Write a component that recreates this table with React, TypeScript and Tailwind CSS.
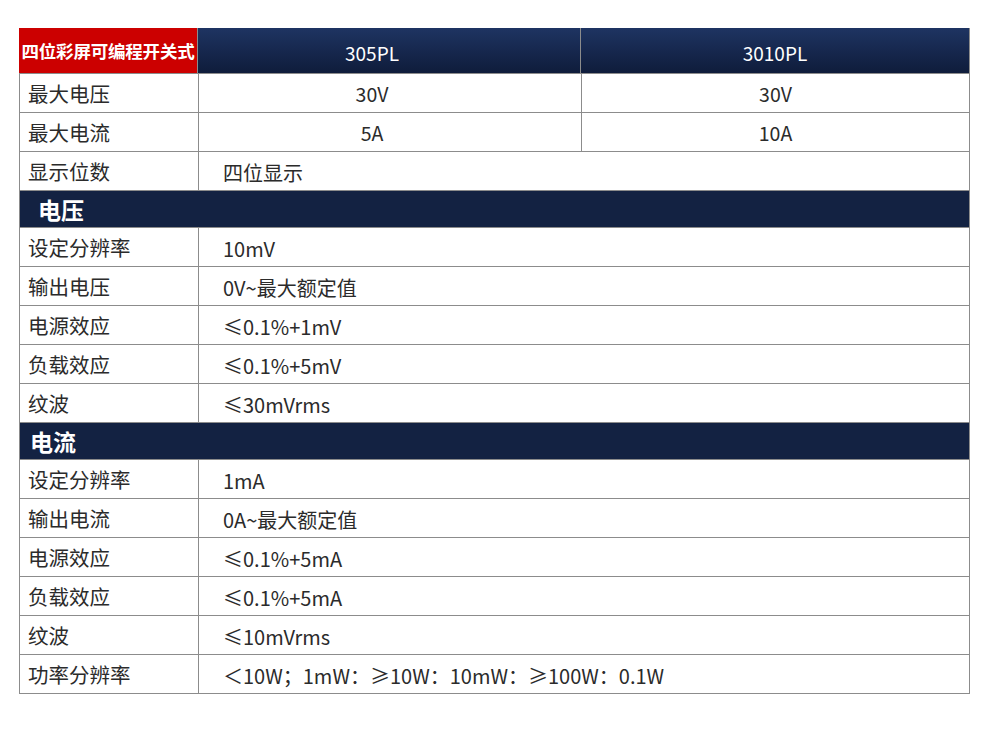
import React from "react";

type Row =
  | { kind: "pair"; label: string; a: string; b: string }
  | { kind: "single"; label: string; value: string }
  | { kind: "section"; title: string; pad: string };

const rows: Row[] = [
  { kind: "pair", label: "最大电压", a: "30V", b: "30V" },
  { kind: "pair", label: "最大电流", a: "5A", b: "10A" },
  { kind: "single", label: "显示位数", value: "四位显示" },
  { kind: "section", title: "电压", pad: "pl-[18px]" },
  { kind: "single", label: "设定分辨率", value: "10mV" },
  { kind: "single", label: "输出电压", value: "0V~最大额定值" },
  { kind: "single", label: "电源效应", value: "≤0.1%+1mV" },
  { kind: "single", label: "负载效应", value: "≤0.1%+5mV" },
  { kind: "single", label: "纹波", value: "≤30mVrms" },
  { kind: "section", title: "电流", pad: "pl-[10px]" },
  { kind: "single", label: "设定分辨率", value: "1mA" },
  { kind: "single", label: "输出电流", value: "0A~最大额定值" },
  { kind: "single", label: "电源效应", value: "≤0.1%+5mA" },
  { kind: "single", label: "负载效应", value: "≤0.1%+5mA" },
  { kind: "single", label: "纹波", value: "≤10mVrms" },
  { kind: "single", label: "功率分辨率", value: "＜10W；1mW：≥10W：10mW：≥100W：0.1W" },
];

const font = { fontFamily: '"Noto Sans CJK SC", "Noto Sans", sans-serif' };

export default function App() {
  return (
    <div className="w-[990px] h-[730px] bg-white pt-[28px] pl-[19px]" style={font}>
      <div className="w-[951px] border-r border-[#8c8c8c]">
        {/* header */}
        <div className="grid grid-cols-[178px_383px_1fr] h-[46px] border-b border-[#8c8c8c]">
          <div className="bg-[#cc0000] flex items-center justify-center text-white text-[17.5px] font-bold tracking-[-0.2px] pt-[2px]">
            四位彩屏可编程开关式
          </div>
          <div className="bg-gradient-to-b from-[#1e3462] to-[#0f1c3b] border-l border-[#8c8c8c] flex items-center justify-center text-white text-[19px] pt-[6px] pr-[34px]">
            305PL
          </div>
          <div className="bg-gradient-to-b from-[#1e3462] to-[#0f1c3b] border-l border-[#8c8c8c] flex items-center justify-center text-white text-[19px] pt-[6px]">
            3010PL
          </div>
        </div>

        {rows.map((row, i) => {
          if (row.kind === "section") {
            return (
              <div
                key={i}
                className={`h-[37px] bg-[#132242] border-b border-l border-[#8c8c8c] flex items-center text-white text-[23px] font-bold ${row.pad}`}
              >
                {row.title}
              </div>
            );
          }
          if (row.kind === "pair") {
            return (
              <div
                key={i}
                className="grid grid-cols-[178px_383px_1fr] h-[39px] border-b border-l border-[#8c8c8c] text-[#2b2b2b]"
              >
                <div className="flex items-center pl-[8px] text-[20.5px]">{row.label}</div>
                <div className="flex items-center justify-center border-l border-[#8c8c8c] text-[19.5px] pr-[36px] pt-[2px]">{row.a}</div>
                <div className="flex items-center justify-center border-l border-[#8c8c8c] text-[19.5px] pt-[2px]">{row.b}</div>
              </div>
            );
          }
          return (
            <div
              key={i}
              className="grid grid-cols-[178px_1fr] h-[39px] border-b border-l border-[#8c8c8c] text-[#2b2b2b]"
            >
              <div className="flex items-center pl-[8px] text-[20.5px]">{row.label}</div>
              <div className="flex items-center border-l border-[#8c8c8c] pl-[24px] pt-[4px] text-[20px]">{row.value}</div>
            </div>
          );
        })}
      </div>
    </div>
  );
}
